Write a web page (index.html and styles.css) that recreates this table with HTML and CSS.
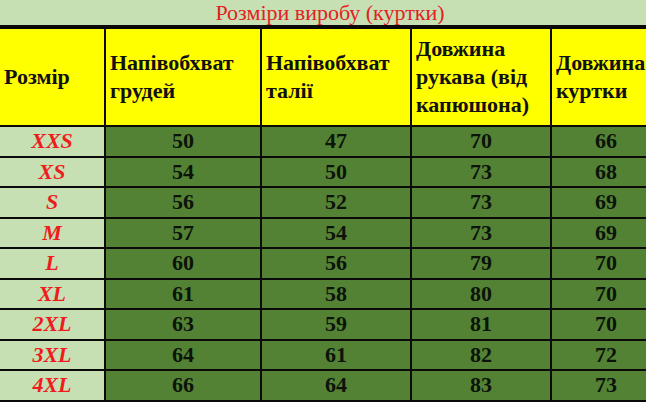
FILE: index.html
```html
<!DOCTYPE html>
<html lang="uk">
<head>
<meta charset="utf-8">
<title>Розміри виробу (куртки)</title>
<link rel="stylesheet" href="styles.css">
</head>
<body>
<div class="sheet">
  <div class="title">Розміри виробу (куртки)</div>
  <div class="grid">
    <div class="hd">Розмір</div>
    <div class="hd">Напівобхват<br>грудей</div>
    <div class="hd">Напівобхват<br>талії</div>
    <div class="hd">Довжина<br>рукава (від<br>капюшона)</div>
    <div class="hd">Довжина<br>куртки</div>

    <div class="sz">XXS</div><div class="num">50</div><div class="num">47</div><div class="num">70</div><div class="num">66</div>
    <div class="sz">XS</div><div class="num">54</div><div class="num">50</div><div class="num">73</div><div class="num">68</div>
    <div class="sz">S</div><div class="num">56</div><div class="num">52</div><div class="num">73</div><div class="num">69</div>
    <div class="sz">M</div><div class="num">57</div><div class="num">54</div><div class="num">73</div><div class="num">69</div>
    <div class="sz">L</div><div class="num">60</div><div class="num">56</div><div class="num">79</div><div class="num">70</div>
    <div class="sz">XL</div><div class="num">61</div><div class="num">58</div><div class="num">80</div><div class="num">70</div>
    <div class="sz">2XL</div><div class="num">63</div><div class="num">59</div><div class="num">81</div><div class="num">70</div>
    <div class="sz">3XL</div><div class="num">64</div><div class="num">61</div><div class="num">82</div><div class="num">72</div>
    <div class="sz">4XL</div><div class="num">66</div><div class="num">64</div><div class="num">83</div><div class="num">73</div>
  </div>
</div>
</body>
</html>
```
FILE: styles.css
```css
html, body {
  margin: 0;
  padding: 0;
  width: 646px;
  height: 402px;
  overflow: hidden;
  background: #c6e0b4;
}
.sheet {
  width: 660px;
  font-family: "Liberation Serif", "Times New Roman", serif;
}
.title {
  height: 25px;
  line-height: 25px;
  text-align: center;
  font-size: 22px;
  color: #e3211f;
  background: #c6e0b4;
}
.grid {
  display: grid;
  grid-template-columns: 104px 154px 148px 138px 108px;
  grid-template-rows: 96px repeat(9, 28.5px);
  column-gap: 2px;
  row-gap: 2px;
  background: #0a0a0a;
  border-top: 4px solid #0a0a0a;
  border-bottom: 2px solid #0a0a0a;
}
.hd {
  background: #ffff00;
  font-weight: bold;
  font-size: 22px;
  line-height: 28px;
  color: #111;
  padding-left: 4px;
  display: flex;
  align-items: center;
  white-space: nowrap;
}
.sz {
  background: #c6e0b4;
  color: #ee1c1c;
  font-weight: bold;
  font-style: italic;
  font-size: 22px;
  display: flex;
  align-items: center;
  justify-content: center;
}
.num {
  background: #548235;
  color: #0c140a;
  font-weight: bold;
  font-size: 22px;
  display: flex;
  align-items: center;
  justify-content: center;
}
```
